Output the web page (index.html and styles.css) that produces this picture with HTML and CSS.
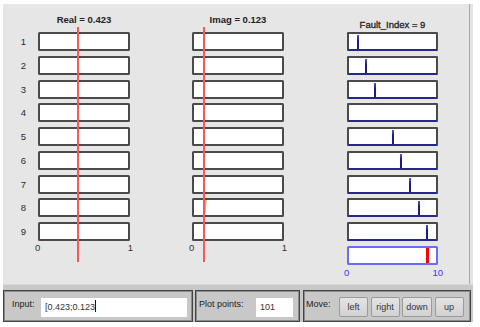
FILE: index.html
```html
<!DOCTYPE html>
<html lang="en">
<head>
  <meta charset="UTF-8">
  <title>Fault Index</title>
  <link rel="stylesheet" href="styles.css">
</head>
<body>

<div class="window">
  <div class="figure">
    <div class="rownums">
      <span>1</span><span>2</span><span>3</span><span>4</span><span>5</span>
      <span>6</span><span>7</span><span>8</span><span>9</span>
    </div>

    <!-- real part -->
    <div class="axes col-real">
      <div class="title">Real = 0.423</div>
      <div class="boxes">
        <div class="box"></div><div class="box"></div><div class="box"></div>
        <div class="box"></div><div class="box"></div><div class="box"></div>
        <div class="box"></div><div class="box"></div><div class="box"></div>
      </div>
      <div class="ticks"><span>0</span><span>1</span></div>
      <div class="marker" style="left: 39px;"></div>
    </div>

    <!-- imaginary part -->
    <div class="axes col-imag">
      <div class="title">Imag = 0.123</div>
      <div class="boxes">
        <div class="box"></div><div class="box"></div><div class="box"></div>
        <div class="box"></div><div class="box"></div><div class="box"></div>
        <div class="box"></div><div class="box"><div class="trace"></div></div><div class="box"></div>
      </div>
      <div class="ticks"><span>0</span><span>1</span></div>
      <div class="marker" style="left: 11px;"></div>
    </div>

    <!-- fault index -->
    <div class="axes col-fault">
      <div class="title">Fault_Index = 9</div>
      <div class="boxes">
        <div class="box plot"><div class="spike" style="left: 10%;"></div></div>
        <div class="box plot"><div class="spike" style="left: 20%;"></div></div>
        <div class="box plot"><div class="spike" style="left: 30%;"></div></div>
        <div class="box plot"></div>
        <div class="box plot"><div class="spike" style="left: 50%;"></div></div>
        <div class="box plot"><div class="spike" style="left: 60%;"></div></div>
        <div class="box plot"><div class="spike" style="left: 70%;"></div></div>
        <div class="box plot"><div class="spike" style="left: 80%;"></div></div>
        <div class="box plot"><div class="spike" style="left: 90%;"></div></div>
        <div class="box result"><div class="bar" style="left: 90%;"></div></div>
      </div>
      <div class="ticks blue"><span>0</span><span>10</span></div>
    </div>
  </div>

  <div class="controls">
    <div class="panel panel-input">
      <label for="input">Input:</label>
      <div class="field wide" id="input">[0.423;0.123<span class="caret"></span></div>
    </div>
    <div class="panel panel-points">
      <label for="points">Plot points:</label>
      <div class="field short" id="points">101</div>
    </div>
    <div class="panel panel-move">
      <span class="move-label">Move:</span>
      <div class="buttons">
        <button>left</button>
        <button>right</button>
        <button class="btn-down">down</button>
        <button>up</button>
      </div>
    </div>
  </div>
</div>

</body>
</html>
```

FILE: styles.css
```css
body {
  margin: 0;
  background-color: #fff;
  font-family: "Liberation Sans", Arial, sans-serif;
  color: #333;
}

.window {
  margin: 4px 0 0 3px;
  width: 470px;
  background-color: #e4e4e4;
}

.figure {
  display: flex;
  width: 466px;
  height: 280px;
  border-right: 1px solid #a8a8a8;
  background-color: #e6e6e6;
}

.rownums {
  display: flex;
  flex-direction: column;
  gap: 4.75px;
  width: 23px;
  padding: 28px 12px 0 0;
  text-align: right;
  font-size: 9.5px;
  color: #2a2a2a;
}

.rownums span {
  line-height: 19px;
}

.axes {
  position: relative;
  width: 92px;
}

.col-imag {
  margin-left: 62px;
}

.col-fault {
  width: 91px;
  margin-left: 63px;
}

.title {
  height: 28px;
  box-sizing: border-box;
  padding-top: 10px;
  line-height: 12px;
  text-align: center;
  font-size: 9.5px;
  font-weight: bold;
  color: #222;
}

.col-fault .title {
  padding-top: 15px;
  font-weight: normal;
  -webkit-text-stroke: 0.3px #222;
}

.boxes {
  display: flex;
  flex-direction: column;
  gap: 4.75px;
}

.box {
  position: relative;
  height: 19px;
  box-sizing: border-box;
  border: 2px solid #4a4a4a;
  border-radius: 1.5px;
  background-color: #fff;
  overflow: hidden;
}

.box.plot {
  border-bottom-color: #26268c;
}

.box.result {
  border-color: #6a6aff;
}

.spike {
  position: absolute;
  top: 1px;
  bottom: 0;
  width: 2px;
  margin-left: -1px;
  background: linear-gradient(#5a5ab8, #1a1a88 40%);
}

.bar {
  position: absolute;
  top: 0;
  bottom: 0;
  width: 3px;
  margin-left: -1.5px;
  background-color: #f00;
}

.trace {
  position: absolute;
  left: 10px;
  top: 0;
  bottom: 0;
  width: 2px;
  background-color: #c0c050;
  transform: skewX(-6deg);
}

.ticks {
  display: flex;
  justify-content: space-between;
  margin: 2px -3px 0;
  font-size: 9.5px;
  line-height: 10px;
}

.ticks.blue {
  margin: 3px -5px 0 -3px;
  color: #3434ff;
}

.marker {
  position: absolute;
  top: 23px;
  width: 2px;
  height: 235px;
  margin-left: -0.5px;
  background-color: #f45a5a;
}

.controls {
  display: flex;
  align-items: flex-end;
  gap: 2px;
  height: 38px;
  box-sizing: border-box;
  padding-top: 6px;
  border-top: 1px solid #d8d8d8;
  background-color: #c8c8c8;
  font-size: 9px;
}

.panel {
  display: flex;
  align-items: flex-start;
  height: 32px;
  box-sizing: border-box;
  border: 1px solid #444;
  box-shadow: inset 0 0 0 1px #8c8c8c;
  background-color: #c8c8c8;
}

.panel label,
.move-label {
  padding-top: 7px;
  line-height: 12px;
  color: #222;
}

.panel-input {
  width: 190px;
  padding-left: 8px;
}

.panel-input label {
  width: 29px;
}

.panel-points {
  width: 105px;
  padding-left: 3px;
}

.panel-points label {
  width: 57px;
}

.panel-move {
  width: 168px;
  margin-left: 1px;
  padding-left: 2px;
}

.move-label {
  width: 33px;
}

.field {
  margin-top: 7px;
  height: 19px;
  box-sizing: border-box;
  padding: 0 4px;
  line-height: 19px;
  background-color: #fff;
  color: #333;
}

.field.wide {
  width: 146px;
}

.field.short {
  width: 37px;
}

.caret {
  display: inline-block;
  width: 1px;
  height: 12px;
  vertical-align: -2px;
  background-color: #111;
}

.buttons {
  display: flex;
  gap: 2.5px;
  margin-top: 6px;
}

button {
  width: 29px;
  height: 20px;
  padding: 0;
  border: 1px solid #9a9a9a;
  border-radius: 2px;
  background: linear-gradient(#e4e4e4, #d2d2d2);
  font-family: "Liberation Sans", Arial, sans-serif;
  font-size: 9px;
  color: #333;
}

button.btn-down {
  width: 30px;
}
```
